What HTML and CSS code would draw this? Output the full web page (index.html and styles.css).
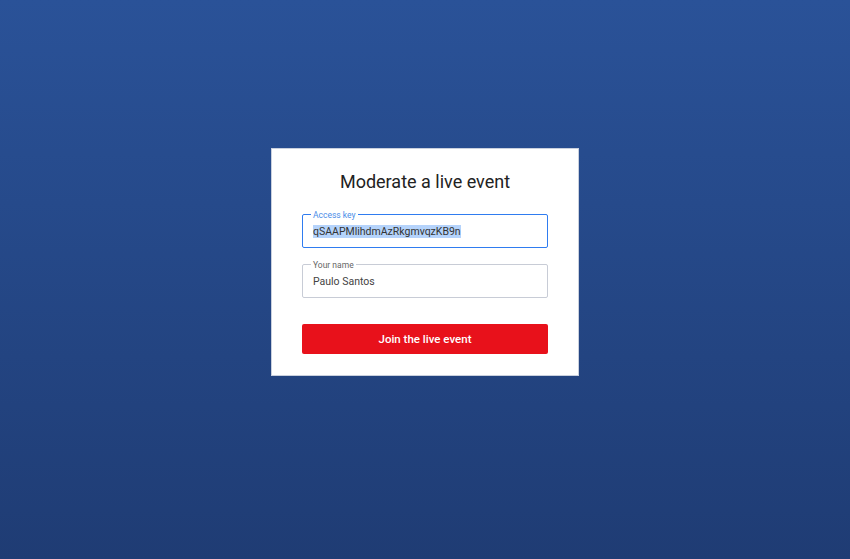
FILE: index.html
```html
<!DOCTYPE html>
<html lang="en">
<head>
<meta charset="utf-8">
<title>Moderate a live event</title>
<link rel="stylesheet" href="styles.css">
</head>
<body>
<main class="page">
  <form class="card">
    <h1 class="title">Moderate a live event</h1>
    <fieldset class="field field--focus">
      <legend class="field-label">Access key</legend>
      <div class="field-value"><span class="selected">qSAAPMlihdmAzRkgmvqzKB9n</span></div>
    </fieldset>
    <fieldset class="field">
      <legend class="field-label">Your name</legend>
      <div class="field-value">Paulo Santos</div>
    </fieldset>
    <button type="button" class="join">Join the live event</button>
  </form>
</main>
</body>
</html>
```
FILE: styles.css
```css
* { box-sizing: border-box; }
html, body { height: 100%; }
body {
  margin: 0;
  font-family: Roboto, "Liberation Sans", Arial, sans-serif;
  background: linear-gradient(180deg, #2a5298 0%, #1f3c74 100%);
}
.page {
  height: 100%;
  display: flex;
  align-items: center;
  justify-content: center;
  padding-bottom: 36px;
}
.card {
  width: 308px;
  background: #fff;
  border: 1px solid #c9d0de;
  padding: 22px 30px 21px;
  display: flex;
  flex-direction: column;
}
.title {
  margin: 0 0 17px;
  font-size: 18px;
  line-height: 22px;
  font-weight: 400;
  color: #222;
  text-align: center;
}
.field {
  margin: 0 0 12px;
  padding: 0 10px;
  border: 1px solid #c8ccd6;
  border-radius: 2px;
  height: 38px;
}
.field--focus { border-color: #2f7cf0; }
.field-label {
  font-size: 8.5px;
  line-height: 10px;
  padding: 0 2px;
  margin-left: -2px;
  color: #666;
}
.field--focus .field-label { color: #4a8de8; }
.field-value {
  font-size: 10.5px;
  line-height: 14px;
  padding-top: 5px;
  color: #444;
}
.selected { background: #b5d3fb; color: #333; }
.join {
  margin-top: 14px;
  height: 30px;
  border: 0;
  border-radius: 2px;
  background: #e8111b;
  color: #fff;
  font-family: inherit;
  font-size: 11.5px;
  font-weight: 500;
}
```
